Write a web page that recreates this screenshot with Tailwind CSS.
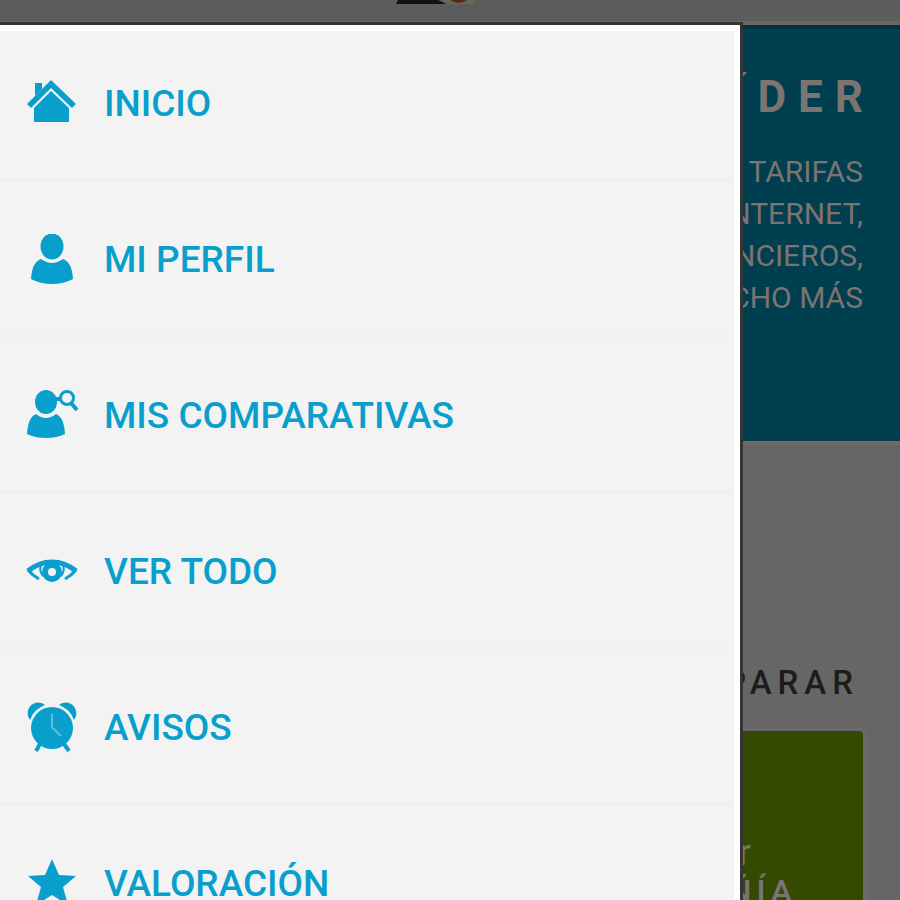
<!DOCTYPE html>
<html lang="es">
  <head>
    <meta charset="UTF-8" />
    <meta name="viewport" content="width=device-width, initial-scale=1.0" />
    <title>Comparador | Menú</title>
    <script src="https://cdn.jsdelivr.net/npm/@tailwindcss/browser@4"></script>
  </head>
  <body class="relative h-screen overflow-hidden bg-[#666] font-['Roboto',sans-serif]">
    <!-- Page behind the menu, already dimmed -->
    <header class="h-[25px] bg-[#5c5c5c] border-b-4 border-[#6b6664] flex justify-center items-start">
      <svg class="w-24 h-[6px] -ml-7" viewBox="0 0 96 6" aria-hidden="true">
        <path d="M10 0H50L58 4H8Z" fill="#14120d" />
        <path d="M54 0H88L84 4H60Z" fill="#6a6858" />
        <path d="M62 0H79Q71 6 62 0Z" fill="#5a2812" />
      </svg>
    </header>
    <main class="text-right whitespace-nowrap">
      <section class="h-[416px] bg-[#003f50] border-t-4 border-[#003244] text-[#7d7370] pt-10">
        <h1 class="pr-[25px] text-[44px] leading-[56px] font-bold tracking-[12px]">COMPARADOR LÍDER</h1>
        <p class="pr-[37px] pt-[26px] text-[30px] leading-[42px]">
          COMPARA LAS MEJORES TARIFAS<br />
          DE TELEFONÍA, INTERNET,<br />
          PRODUCTOS FINANCIEROS,<br />
          SEGUROS Y MUCHO MÁS
        </p>
      </section>
      <section class="border-t-4 border-[#716a68] pt-[218px] pr-[37px]">
        <h2 class="text-[33px] leading-10 font-medium tracking-[6px] text-[#1c1c1c] pr-1">ELIGE QUÉ COMPARAR</h2>
        <div class="mt-7 ml-9 h-80 rounded-sm bg-[#344a00] ring-4 ring-[#6a6870] text-[#77757c] pt-[104px] pr-[66px]">
          <p class="pr-[46px] text-[36px] leading-9">Ahorrar</p>
          <p class="text-[32px] leading-10 font-medium tracking-[5px]">COMPAÑÍA</p>
        </div>
      </section>
    </main>

    <!-- Side menu -->
    <div class="absolute top-[22px] bottom-0 left-0 w-[82.5%] border-t-3 border-r-3 border-[#353535] overflow-hidden">
      <nav class="h-full border-t-6 border-r-6 border-white bg-[#f3f3f3] text-[37px] leading-10 font-medium text-[#099fcd]">
        <ul class="-mt-[6px]">
          <li class="border-b-2 border-[#efefef]">
            <a href="#inicio" class="flex items-center gap-[26px] h-[154px] pt-1 pl-[26px]">
              <svg class="size-[52px]" viewBox="0 0 52 52" fill="currentColor" aria-hidden="true">
                <path d="M9 5h7v6l-7 7Z" />
                <path d="M25 2 50 26 46 30 25 10 5 30 1 26Z" />
                <path d="M25 13 43 30V44H8V30Z" />
              </svg>
              INICIO
            </a>
          </li>
          <li class="border-b-2 border-[#efefef]">
            <a href="#perfil" class="flex items-center gap-[26px] h-[154px] pt-1 pl-[26px]">
              <svg class="size-[52px]" viewBox="0 0 52 52" fill="currentColor" aria-hidden="true">
                <ellipse cx="26" cy="12.5" rx="11.5" ry="13" />
                <path d="M15 25Q26 33 37 25Q46 28 47 45Q38 50 26 50T5 45Q6 28 15 25Z" />
              </svg>
              MI PERFIL
            </a>
          </li>
          <li class="border-b-2 border-[#efefef]">
            <a href="#comparativas" class="flex items-center gap-[26px] h-[154px] pt-1 pl-[26px]">
              <svg class="size-[52px]" viewBox="0 0 52 52" fill="currentColor" aria-hidden="true">
                <ellipse cx="20" cy="12" rx="11" ry="12" />
                <path d="M10 24Q20 32 30 24Q38 27 39 44Q31 48 20 48T1 44Q2 27 10 24Z" />
                <circle cx="41" cy="8" r="6.5" fill="none" stroke="currentColor" stroke-width="3" />
                <path d="M45 13 51 20M29 9H35" fill="none" stroke="currentColor" stroke-width="4" />
              </svg>
              MIS COMPARATIVAS
            </a>
          </li>
          <li class="border-b-2 border-[#efefef]">
            <a href="#todo" class="flex items-center gap-[26px] h-[154px] pt-1 pl-[26px]">
              <svg class="size-[52px]" viewBox="0 0 52 52" fill="none" stroke="currentColor" aria-hidden="true">
                <path d="M2 25Q13 16 26 16T50 25" stroke-width="5" />
                <path d="M2 24Q6 29 13 33M50 24Q46 29 39 33" stroke-width="3" />
                <path d="M16 18Q12 24 17 30M36 18Q40 24 35 30" stroke-width="2" />
                <circle cx="26" cy="26" r="7" stroke-width="6" />
              </svg>
              VER TODO
            </a>
          </li>
          <li class="border-b-2 border-[#efefef]">
            <a href="#avisos" class="flex items-center gap-[26px] h-[154px] pt-1 pl-[26px]">
              <svg class="size-[52px]" viewBox="0 0 52 52" fill="currentColor" aria-hidden="true">
                <path d="M4 18C-3 9 7 -5 19 3Q8 7 4 18Z" />
                <path d="M48 18C55 9 45 -5 33 3Q44 7 48 18Z" />
                <circle cx="26" cy="26" r="21" />
                <path d="M14 42 10 49M38 42 43 49" stroke="currentColor" stroke-width="4" />
                <path d="M26 12V25L35 34" fill="none" stroke="#62bede" stroke-width="2" />
              </svg>
              AVISOS
            </a>
          </li>
          <li>
            <a href="#valoracion" class="flex items-center gap-[26px] h-[154px] pt-1 pl-[26px]">
              <svg class="size-[52px]" viewBox="0 0 52 52" fill="currentColor" aria-hidden="true">
                <path d="M26 1 33 17 50 18 37 29 42 47 26 37 10 47 15 29 2 18 19 17Z" />
              </svg>
              VALORACIÓN
            </a>
          </li>
        </ul>
      </nav>
    </div>
  </body>
</html>
